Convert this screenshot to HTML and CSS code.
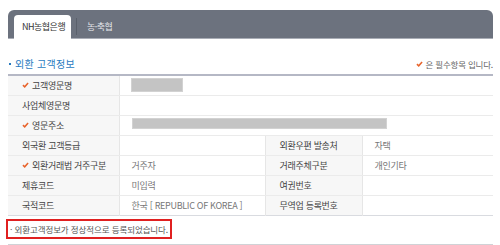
FILE: index.html
```html
<!DOCTYPE html>
<html lang="ko">
<head>
<meta charset="utf-8">
<link rel="stylesheet" href="styles.css">
</head>
<body>
<div class="page">
  <div class="tabbar">
    <div class="tab active">NH농협은행</div>
    <div class="tab-sep"></div>
    <div class="tab">농·축협</div>
  </div>

  <div class="section-head">
    <h2 class="section-title"><span class="dot"></span>외환 고객정보</h2>
    <div class="req-note"><svg class="chk" viewBox="0 0 8 7"><path d="M1 3.6 L3.1 5.6 L7 1.2" fill="none" stroke="#e8642c" stroke-width="1.8"/></svg>은 필수항목 입니다.</div>
  </div>

  <table class="info">
    <colgroup>
      <col class="c1"><col class="c2"><col class="c3"><col class="c4">
    </colgroup>
    <tr>
      <th><svg class="chk" viewBox="0 0 8 7"><path d="M1 3.6 L3.1 5.6 L7 1.2" fill="none" stroke="#e8642c" stroke-width="1.8"/></svg>고객영문명</th>
      <td colspan="3"><span class="mask mask-name"></span></td>
    </tr>
    <tr>
      <th>사업체영문명</th>
      <td colspan="3"></td>
    </tr>
    <tr>
      <th><svg class="chk" viewBox="0 0 8 7"><path d="M1 3.6 L3.1 5.6 L7 1.2" fill="none" stroke="#e8642c" stroke-width="1.8"/></svg>영문주소</th>
      <td colspan="3"><span class="mask mask-addr"></span></td>
    </tr>
    <tr>
      <th>외국환 고객등급</th>
      <td></td>
      <th>외환우편 발송처</th>
      <td>자택</td>
    </tr>
    <tr>
      <th><svg class="chk" viewBox="0 0 8 7"><path d="M1 3.6 L3.1 5.6 L7 1.2" fill="none" stroke="#e8642c" stroke-width="1.8"/></svg>외환거래법 거주구분</th>
      <td>거주자</td>
      <th>거래주체구분</th>
      <td>개인기타</td>
    </tr>
    <tr>
      <th>제휴코드</th>
      <td>미입력</td>
      <th>여권번호</th>
      <td></td>
    </tr>
    <tr>
      <th>국적코드</th>
      <td>한국 [ REPUBLIC OF KOREA ]</td>
      <th>무역업 등록번호</th>
      <td></td>
    </tr>
  </table>

  <div class="result">
    <p class="result-msg">· 외환고객정보가 정상적으로 등록되었습니다.</p>
  </div>
  <div class="bottom-line"></div>
</div>
</body>
</html>
```

FILE: styles.css
```css
* { box-sizing: border-box; }
html, body { margin: 0; padding: 0; background: #fff; }
body {
  font-family: "Noto Sans CJK KR", "Noto Sans", sans-serif;
  font-size: 9px;
  color: #444;
}
.page {
  width: 485px;
  margin: 10px 0 0 8px;
}
.tabbar {
  height: 29px;
  background: #6c727e;
  border-radius: 6px 6px 0 0;
  border-bottom: 1px solid #a9adb6;
  display: flex;
  align-items: flex-end;
  padding-left: 6px;
}
.tab {
  height: 23px;
  line-height: 23px;
  padding: 0 8px 0 10px;
  color: #e4e6ea;
  font-size: 9px;
  letter-spacing: -0.5px;
  white-space: nowrap;
}
.tab.active {
  background: #fff;
  color: #333;
  border-radius: 4px 4px 0 0;
  width: 57px;
  padding: 0 0 0 8px;
  margin-bottom: -1px;
  height: 24px;
  line-height: 24px;
}
.tab-sep {
  width: 1px;
  height: 17px;
  background: #5a606b;
  margin: 0 0 3px 5px;
}
.section-head {
  display: flex;
  justify-content: space-between;
  align-items: center;
  height: 35px;
  padding-top: 14px;
}
.section-title {
  margin: 0;
  font-size: 10px;
  line-height: 14px;
  font-weight: normal;
  color: #2a7bbf;
  display: flex;
  align-items: center;
  letter-spacing: 0.3px;
}
.dot {
  width: 2px;
  height: 2px;
  background: #2a7bbf;
  margin: 0 4px 0 1px;
}
.req-note {
  font-size: 8.5px;
  color: #666;
  display: flex;
  align-items: center;
  letter-spacing: -0.2px;
}
.chk {
  width: 7px;
  height: 6px;
  margin-right: 3px;
  flex: none;
}
.info {
  width: 485px;
  border-collapse: collapse;
  table-layout: fixed;
  border-top: 2px solid #b5b8c5;
  border-bottom: 1px solid #d9dbe0;
}
.c1 { width: 111px; }
.c2 { width: 146px; }
.c3 { width: 97px; }
.c4 { width: 131px; }
.info th, .info td {
  height: 20px;
  padding: 0;
  border-bottom: 1px solid #ebebeb;
  font-size: 9px;
  font-weight: normal;
  text-align: left;
  vertical-align: middle;
  white-space: nowrap;
  letter-spacing: -0.3px;
}
.info tr:last-child th, .info tr:last-child td { border-bottom: none; }
.info th {
  background: #f7f7f7;
  color: #444;
  padding-left: 14px;
  border-right: 1px solid #e6e6e6;
}
.info th .chk { display: inline-block; vertical-align: middle; margin: -2px 3px 0 0; }
.info td {
  color: #777;
  padding-left: 12px;
  border-right: 1px solid #e6e6e6;
}
.info td:last-child { border-right: none; }
.mask {
  display: block;
  background: #c4c4c4;
  border: 1px solid #d2d2d2;
}
.mask-name { width: 52px; height: 14px; margin-left: -1px; }
.mask-addr { width: 255px; height: 11px; margin-top: -4px; }
.result {
  margin: 3px 0 0 -2px;
  width: 166px;
  height: 20px;
  border: 2px solid #e02020;
  display: flex;
  align-items: center;
}
.result-msg {
  margin: 0;
  padding-left: 2px;
  font-size: 8.5px;
  color: #555;
  letter-spacing: -0.1px;
  white-space: nowrap;
}
.bottom-line {
  margin-top: 5px;
  height: 1px;
  background: #d0d2d6;
}
```
